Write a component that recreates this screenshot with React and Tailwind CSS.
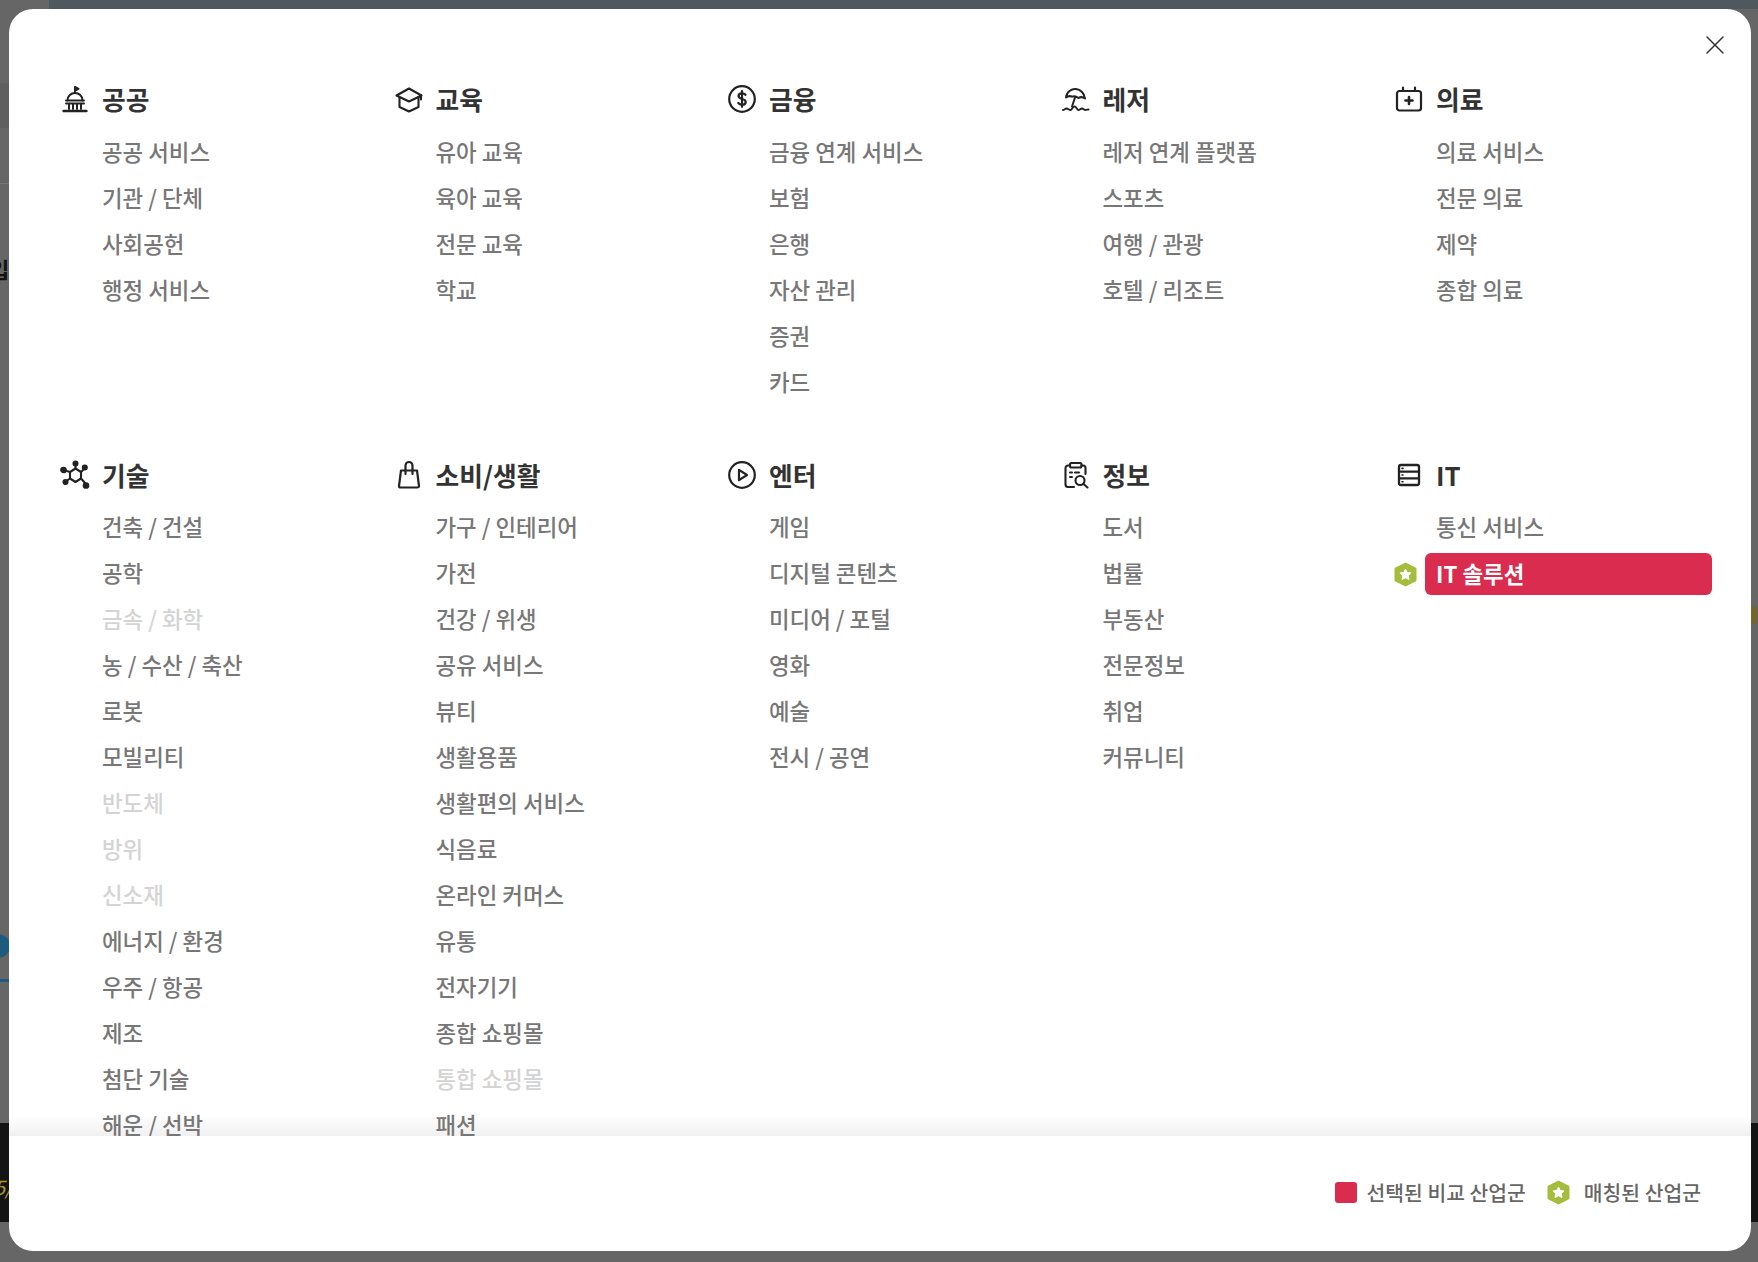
import { X } from 'lucide-react';

function DomeIcon() {
  return (
    <svg width="30" height="30" viewBox="0 0 30 30" fill="none" stroke="#222" strokeWidth="2" strokeLinecap="round" strokeLinejoin="round">
      <path d="M15 9V3l3.500 1.800L15 6.600" />
      <path d="M7.500 16.500c0-4.500 3.600-7.500 7.500-7.500s7.500 3 7.500 7.500" />
      <path d="M6 16.500h18M6 19.500h18" />
      <path d="M9 20v5M13 20v5M17 20v5M21 20v5" />
      <path d="M3.500 27h23" strokeWidth="2.400" />
    </svg>
  );
}

function CapIcon() {
  return (
    <svg width="30" height="30" viewBox="0 0 30 30" fill="none" stroke="#222" strokeWidth="2.100" strokeLinecap="round" strokeLinejoin="round">
      <path d="M15 4.500 2.500 11.500l12.500 6 12.500-6z" />
      <path d="M5.500 13.500v9.500L15 27.500l9.500-4.500v-9.500" />
      <path d="M27 11.500v4" />
    </svg>
  );
}

function DollarIcon() {
  return (
    <svg width="30" height="30" viewBox="0 0 30 30" fill="none" stroke="#222" strokeWidth="2.200" strokeLinecap="round" strokeLinejoin="round">
      <circle cx="15" cy="15" r="12.800" />
      <path d="M18.500 10.800c-.8-1-2-1.500-3.500-1.500-2 0-3.500 1-3.500 2.800 0 3.800 7.200 1.900 7.200 5.800 0 1.800-1.700 2.800-3.700 2.800-1.600 0-2.900-.6-3.700-1.700" />
      <path d="M15 7.200v15.600" />
    </svg>
  );
}

function BeachIcon() {
  return (
    <svg width="30" height="30" viewBox="0 0 30 30" fill="none" stroke="#222" strokeWidth="2" strokeLinecap="round" strokeLinejoin="round">
      <path d="M5 13.500C5.500 8 10.500 4.500 15 5c4.500.5 8.500 4.500 9 9.500-2.500-1.800-4.500-1.800-6.500-.5-2.500-2-4.500-2.300-6.500-1.300-2-1-4-.7-6 .8z" />
      <path d="M14 13.500 11 22.500" />
      <path d="M2 26c1.500 0 2-1.500 3.500-1.500S8 26 9.500 26s2-3.500 4-3.500 2.500 3.500 4 3.500 2-1.500 3.500-1.500 2 1.500 3.500 1.500 2-.6 3-.6" />
    </svg>
  );
}

function MedicalIcon() {
  return (
    <svg width="30" height="30" viewBox="0 0 30 30" fill="none" stroke="#222" strokeWidth="2.200" strokeLinecap="round" strokeLinejoin="round">
      <rect x="3" y="7" width="24" height="19.500" rx="2.500" />
      <path d="M9 3.500V7M21 3.500V7" />
      <path d="M15 13v7M11.500 16.500h7" strokeWidth="2.600" />
    </svg>
  );
}

function MoleculeIcon() {
  return (
    <svg width="30" height="30" viewBox="0 0 30 30" fill="none" stroke="#222" strokeWidth="2.100" strokeLinecap="round" strokeLinejoin="round">
      <path d="M15.500 8.500 21 12v6.500L15.500 22 10 18.500V12z" />
      <path d="M15.500 8.500V5M21 12l3-3M21 18.500l4.500 5M10 18.500l-3.500 2.500M10 12 5 10.500" />
      <circle cx="15.500" cy="3.500" r="2" fill="#222" />
      <circle cx="24.800" cy="7.500" r="2" fill="#222" />
      <circle cx="26" cy="25.500" r="2.300" fill="#222" />
      <circle cx="5.500" cy="22" r="2" fill="#222" />
      <circle cx="3.500" cy="10" r="2.300" fill="#222" />
    </svg>
  );
}

function BagIcon() {
  return (
    <svg width="30" height="30" viewBox="0 0 30 30" fill="none" stroke="#222" strokeWidth="2.200" strokeLinecap="round" strokeLinejoin="round">
      <path d="M7 10.500h16l2 15.500a1.500 1.500 0 0 1-1.500 1.500h-17A1.500 1.500 0 0 1 5 26z" />
      <path d="M11.500 14V5.500a3.500 3.500 0 0 1 7 0V14" />
    </svg>
  );
}

function PlayIcon() {
  return (
    <svg width="30" height="30" viewBox="0 0 30 30" fill="none" stroke="#222" strokeWidth="2.200" strokeLinecap="round" strokeLinejoin="round">
      <circle cx="15" cy="15" r="12.800" />
      <path d="M12 9.800v10.400l8-5.200z" />
    </svg>
  );
}

function ClipboardIcon() {
  return (
    <svg width="30" height="30" viewBox="0 0 30 30" fill="none" stroke="#222" strokeWidth="2.100" strokeLinecap="round" strokeLinejoin="round">
      <path d="M9 5.500H7a2.500 2.500 0 0 0-2.500 2.500v16.500A2.500 2.500 0 0 0 7 27h6" />
      <path d="M20.500 5.500H22a2.500 2.500 0 0 1 2.500 2.500v6" />
      <rect x="9" y="3" width="11.500" height="4.500" rx="1.500" />
      <path d="M9 12.500h2M14 12.500h4M9 17h2" />
      <circle cx="19" cy="20.500" r="4.500" />
      <path d="m22.500 24 4 3.500" />
    </svg>
  );
}

function ServerIcon() {
  return (
    <svg width="30" height="30" viewBox="0 0 30 30" fill="none" stroke="#222" strokeWidth="2.300" strokeLinecap="round" strokeLinejoin="round">
      <rect x="5" y="5" width="20" height="20" rx="2" />
      <path d="M5 11.700h20M5 18.300h20" />
      <path d="M8 8.400h1M8 15h1M8 21.700h1" strokeWidth="1.600" />
    </svg>
  );
}

function MatchBadge() {
  return (
    <svg width="23" height="25" viewBox="0 0 23 25">
      <path d="M11.500 0.500 21.500 5.500a1.500 1.500 0 0 1 1 1.500v11a1.500 1.500 0 0 1-1 1.500l-10 5-10-5a1.500 1.500 0 0 1-1-1.500V7a1.500 1.500 0 0 1 1-1.500z" fill="#a4bd3c" />
      <path d="m11.500 7 1.700 3.500 3.900.5-2.800 2.700.7 3.800-3.500-1.800-3.500 1.800.7-3.800L5.900 11l3.900-.5z" fill="#fff" stroke="#fff" strokeWidth="1" strokeLinejoin="round" />
    </svg>
  );
}

const row1 = [
  { title: '공공', icon: <DomeIcon />, items: ['공공 서비스', '기관 / 단체', '사회공헌', '행정 서비스'] },
  { title: '교육', icon: <CapIcon />, items: ['유아 교육', '육아 교육', '전문 교육', '학교'] },
  { title: '금융', icon: <DollarIcon />, items: ['금융 연계 서비스', '보험', '은행', '자산 관리', '증권', '카드'] },
  { title: '레저', icon: <BeachIcon />, items: ['레저 연계 플랫폼', '스포츠', '여행 / 관광', '호텔 / 리조트'] },
  { title: '의료', icon: <MedicalIcon />, items: ['의료 서비스', '전문 의료', '제약', '종합 의료'] },
];

const row2 = [
  {
    title: '기술',
    icon: <MoleculeIcon />,
    items: ['건축 / 건설', '공학', '금속 / 화학', '농 / 수산 / 축산', '로봇', '모빌리티', '반도체', '방위', '신소재', '에너지 / 환경', '우주 / 항공', '제조', '첨단 기술', '해운 / 선박'],
  },
  {
    title: '소비/생활',
    icon: <BagIcon />,
    items: ['가구 / 인테리어', '가전', '건강 / 위생', '공유 서비스', '뷰티', '생활용품', '생활편의 서비스', '식음료', '온라인 커머스', '유통', '전자기기', '종합 쇼핑몰', '통합 쇼핑몰', '패션'],
  },
  { title: '엔터', icon: <PlayIcon />, items: ['게임', '디지털 콘텐츠', '미디어 / 포털', '영화', '예술', '전시 / 공연'] },
  { title: '정보', icon: <ClipboardIcon />, items: ['도서', '법률', '부동산', '전문정보', '취업', '커뮤니티'] },
  { title: 'IT', icon: <ServerIcon />, items: ['통신 서비스', 'IT 솔루션'] },
];

const disabled = ['금속 / 화학', '반도체', '방위', '신소재', '통합 쇼핑몰'];

function Category({ cat, tight }) {
  return (
    <div>
      <div className="flex items-center gap-[12px] h-10">
        <span className="w-[30px] h-[30px] shrink-0">{cat.icon}</span>
        <h3 className="text-[25.8px] font-bold text-[#333] leading-10">{cat.title}</h3>
      </div>
      <ul className={`flex flex-col gap-1 ${tight ? 'mt-[11px]' : 'mt-3'}`}>
        {cat.items.map((item) => {
          if (item === 'IT 솔루션') {
            return (
              <li key={item} className="relative mt-px ml-[31px] w-[287px] h-[42px] px-[11px] flex items-center rounded-md bg-[#da2c4e] text-white font-bold text-[22.4px]">
                <span className="absolute left-[-31px] top-[9px] flex"><MatchBadge /></span>
                {item}
              </li>
            );
          }
          return (
            <li
              key={item}
              className={`ml-[31px] h-[42px] px-[11px] flex items-center text-[22.4px] font-medium ${
                disabled.includes(item) ? 'text-[#d4d4d4]' : 'text-[#777]'
              }`}
            >
              {item}
            </li>
          );
        })}
      </ul>
    </div>
  );
}

export default function App() {
  return (
    <div className="relative w-[1758px] h-[1262px] overflow-hidden bg-[#666] font-['Noto_Sans_CJK_KR','Noto_Sans',sans-serif]">
      {/* page behind the overlay */}
      <div className="absolute left-[49px] top-0 right-0 h-[9px] bg-[#4e595f]" />
      <div className="absolute left-0 top-[83px] w-[9px] h-[45px] bg-[#5f5f5f]" />
      <div className="absolute left-0 top-[183px] w-[9px] h-px bg-[#777]" />
      <span className="absolute left-[-11px] top-[252px] text-[22px] font-bold text-[#111]">입</span>
      <div className="absolute left-[-14px] top-[934px] w-[24px] h-[24px] rounded-full bg-[#1d5b7e]" />
      <div className="absolute left-0 top-[979px] w-[9px] h-[3px] bg-[#1d5b7e]" />
      <div className="absolute left-0 right-0 top-[1123px] h-[99px] bg-[#141414]" />
      <span className="absolute left-[-6px] top-[1172px] text-[20px] italic text-[#a8972c]">5/</span>
      <div className="absolute right-[1px] top-[606px] w-[6px] h-[18px] rounded-full bg-[#6f6a2c]" />

      <div className="relative ml-[9px] mt-[9px] w-[1742px] h-[1242px] bg-white rounded-3xl overflow-hidden flex flex-col">
        <button className="absolute right-[20px] top-[20px] z-10 text-[#333]">
          <X size={32} strokeWidth={1.1} />
        </button>

        <div className="relative h-[1127px] overflow-hidden pt-[70px] pl-[51px]">
          <div className="absolute left-0 right-0 bottom-0 h-[21px] bg-gradient-to-b from-white to-[#f0f0f0]" />
          <div className="relative grid grid-cols-[repeat(5,333.5px)] gap-y-[52px]">
            {row1.map((cat) => <Category key={cat.title} cat={cat} />)}
            {row2.map((cat) => <Category key={cat.title} cat={cat} tight />)}
          </div>
        </div>

        <div className="flex-1 flex items-center justify-end pr-[50px] pb-[3px] text-[20.4px] font-medium text-[#666]">
          <span className="w-[22px] h-[21px] rounded-[3px] bg-[#da2c4e] mr-[10px]" />
          <span>선택된 비교 산업군</span>
          <span className="flex ml-[21px] mr-[14px]"><MatchBadge /></span>
          <span>매칭된 산업군</span>
        </div>
      </div>
    </div>
  );
}
